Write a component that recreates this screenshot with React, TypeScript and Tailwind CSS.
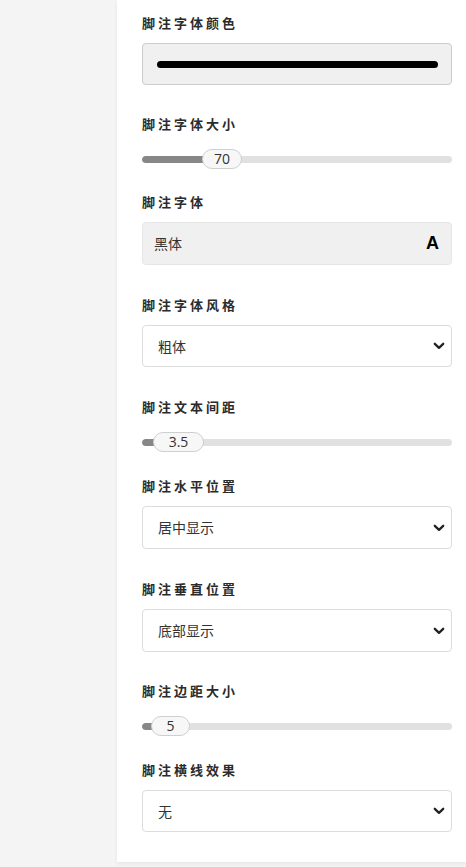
import React from "react";

const font = { fontFamily: '"Open Sans", "Noto Sans CJK SC", sans-serif' };

function Label({ text, mt }: { text: string; mt: string }) {
  return (
    <div className={`${mt} h-[20px] leading-[20px] text-[13px] font-bold tracking-[3px] text-[#2b2b2b]`}>
      {text}
    </div>
  );
}

function Chevron() {
  return (
    <svg width="12" height="8" viewBox="0 0 12 8" fill="none">
      <path d="M1.8 1.8 L6 5.8 L10.2 1.8" stroke="#222" strokeWidth="2.3" strokeLinecap="round" strokeLinejoin="round" />
    </svg>
  );
}

function Select({ value, h }: { value: string; h: string }) {
  return (
    <div className={`mt-[10px] ${h} rounded-[4px] border border-[#dcdcdc] bg-white flex items-center justify-between pl-[15px] pr-[6px]`}>
      <span className="text-[14px] text-[#333]">{value}</span>
      <Chevron />
    </div>
  );
}

function Slider({ value, left, width, fill }: { value: string; left: number; width: number; fill: number }) {
  return (
    <div className="mt-[15px] h-[20px] relative flex items-center">
      <div className="w-full h-[7px] rounded-full bg-[#e1e1e1] relative overflow-hidden">
        <div className="absolute left-0 top-0 h-full bg-[#878787] rounded-full" style={{ width: fill }} />
      </div>
      <div
        className="absolute top-0 h-[20px] rounded-full border border-[#cfcfcf] bg-[#f7f7f7] flex items-center justify-center text-[14px] text-[#333] leading-none"
        style={{ left, width }}
      >
        {value}
      </div>
    </div>
  );
}

export default function App() {
  return (
    <div className="min-h-[867px] bg-[#f3f4f3] flex" style={font}>
      <div className="w-[117px] shrink-0" />
      <div className="flex-1 self-start bg-white pl-[25px] pr-[14px] pb-[30px] shadow-[0_2px_4px_rgba(0,0,0,0.06)]">
        <Label text="脚注字体颜色" mt="mt-[13px]" />
        <div className="mt-[10px] h-[42px] rounded-[4px] border border-[#cccccc] bg-[#f0f0f0] flex items-center pl-[14px] pr-[13px]">
          <div className="w-full h-[7px] rounded-full bg-black" />
        </div>

        <Label text="脚注字体大小" mt="mt-[29px]" />
        <Slider value="70" left={60} width={40} fill={70} />

        <Label text="脚注字体" mt="mt-[23px]" />
        <div className="mt-[10px] h-[43px] rounded-[4px] border border-[#e6e6e6] bg-[#f0f0f0] flex items-center justify-between pl-[11px] pr-[12px]">
          <span className="text-[14px] text-[#333]">黑体</span>
          <span className="text-[18px] font-black text-black" style={{ fontFamily: '"Liberation Sans", Arial, sans-serif' }}>A</span>
        </div>

        <Label text="脚注字体风格" mt="mt-[30px]" />
        <Select value="粗体" h="h-[42px]" />

        <Label text="脚注文本间距" mt="mt-[30px]" />
        <Slider value="3.5" left={11} width={51} fill={18} />

        <Label text="脚注水平位置" mt="mt-[24px]" />
        <Select value="居中显示" h="h-[43px]" />

        <Label text="脚注垂直位置" mt="mt-[30px]" />
        <Select value="底部显示" h="h-[43px]" />

        <Label text="脚注边距大小" mt="mt-[29px]" />
        <Slider value="5" left={9} width={39} fill={16} />

        <Label text="脚注横线效果" mt="mt-[24px]" />
        <Select value="无" h="h-[42px]" />
      </div>
    </div>
  );
}
